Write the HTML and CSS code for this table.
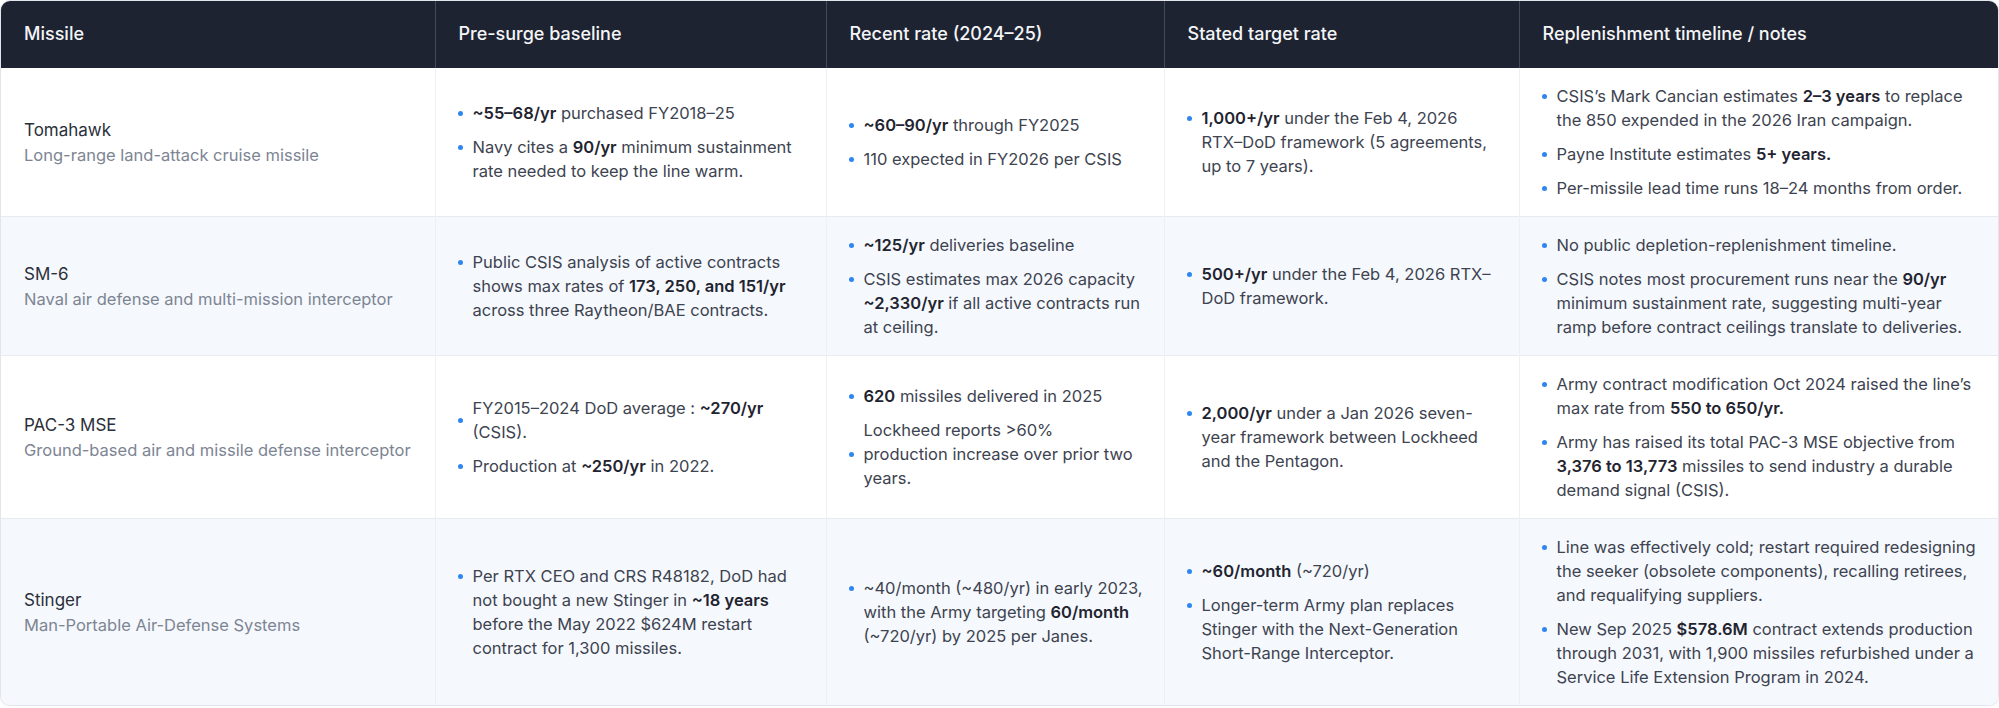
FILE: index.html
```html
<!DOCTYPE html>
<html lang="en">
<head>
<meta charset="utf-8">
<title>Missile production rates</title>
<link rel="stylesheet" href="styles.css">
</head>
<body>
<div class="table-wrap">
  <table class="rates">
    <colgroup>
      <col class="col-missile">
      <col class="col-pre">
      <col class="col-recent">
      <col class="col-target">
      <col class="col-notes">
    </colgroup>
    <thead>
      <tr>
        <th>Missile</th>
        <th>Pre-surge baseline</th>
        <th>Recent rate (2024–25)</th>
        <th>Stated target rate</th>
        <th>Replenishment timeline / notes</th>
      </tr>
    </thead>
    <tbody>
      <tr>
        <td class="name-cell"><div class="name">Tomahawk</div><div class="desc">Long-range land-attack cruise missile</div></td>
        <td><ul class="pts">
          <li><b>~55–68/yr</b> purchased FY2018–25</li>
          <li>Navy cites a <b>90/yr</b> minimum sustainment rate needed to keep the line warm.</li>
        </ul></td>
        <td><ul class="pts">
          <li><b>~60–90/yr</b> through FY2025</li>
          <li>110 expected in FY2026 per CSIS</li>
        </ul></td>
        <td><ul class="pts">
          <li><b>1,000+/yr</b> under the Feb 4, 2026 RTX–DoD framework (5 agreements, up to 7 years).</li>
        </ul></td>
        <td><ul class="pts">
          <li>CSIS’s Mark Cancian estimates <b>2–3 years</b> to replace the 850 expended in the 2026 Iran campaign.</li>
          <li>Payne Institute estimates <b>5+ years.</b></li>
          <li>Per-missile lead time runs 18–24 months from order.</li>
        </ul></td>
      </tr>
      <tr class="alt">
        <td class="name-cell"><div class="name">SM-6</div><div class="desc">Naval air defense and multi-mission interceptor</div></td>
        <td><ul class="pts">
          <li>Public CSIS analysis of active contracts shows max rates of <b>173, 250, and 151/yr</b> across three Raytheon/BAE contracts.</li>
        </ul></td>
        <td><ul class="pts">
          <li><b>~125/yr</b> deliveries baseline</li>
          <li>CSIS estimates max 2026 capacity <b>~2,330/yr</b> if all active contracts run at ceiling.</li>
        </ul></td>
        <td><ul class="pts">
          <li><b>500+/yr</b> under the Feb 4, 2026 RTX–DoD framework.</li>
        </ul></td>
        <td><ul class="pts">
          <li>No public depletion-replenishment timeline.</li>
          <li>CSIS notes most procurement runs near the <b>90/yr</b> minimum sustainment rate, suggesting multi-year ramp before contract ceilings translate to deliveries.</li>
        </ul></td>
      </tr>
      <tr>
        <td class="name-cell"><div class="name">PAC-3 MSE</div><div class="desc">Ground-based air and missile defense interceptor</div></td>
        <td><ul class="pts">
          <li class="mid"><span class="txt">FY2015–2024 DoD average : <b>~270/yr</b> (CSIS).</span></li>
          <li>Production at <b>~250/yr</b> in 2022.</li>
        </ul></td>
        <td><ul class="pts">
          <li><b>620</b> missiles delivered in 2025</li>
          <li class="mid"><span class="txt">Lockheed reports &gt;60%<br>production increase over prior two years.</span></li>
        </ul></td>
        <td><ul class="pts">
          <li><b>2,000/yr</b> under a Jan 2026 seven-year framework between Lockheed and the Pentagon.</li>
        </ul></td>
        <td><ul class="pts">
          <li>Army contract modification Oct 2024 raised the line’s max rate from <b>550 to 650/yr.</b></li>
          <li>Army has raised its total PAC-3 MSE objective from <b>3,376 to 13,773</b> missiles to send industry a durable demand signal (CSIS).</li>
        </ul></td>
      </tr>
      <tr class="alt">
        <td class="name-cell"><div class="name">Stinger</div><div class="desc">Man-Portable Air-Defense Systems</div></td>
        <td><ul class="pts">
          <li>Per RTX CEO and CRS R48182, DoD had not bought a new Stinger in <b>~18 years</b> before the May 2022 $624M restart contract for 1,300 missiles.</li>
        </ul></td>
        <td><ul class="pts">
          <li>~40/month (~480/yr) in early 2023, with the Army targeting <b>60/month</b> (~720/yr) by 2025 per Janes.</li>
        </ul></td>
        <td><ul class="pts">
          <li><b>~60/month</b> (~720/yr)</li>
          <li>Longer-term Army plan replaces Stinger with the Next-Generation Short-Range Interceptor.</li>
        </ul></td>
        <td><ul class="pts">
          <li>Line was effectively cold; restart required redesigning the seeker (obsolete components), recalling retirees, and requalifying suppliers.</li>
          <li>New Sep 2025 <b>$578.6M</b> contract extends production through 2031, with 1,900 missiles refurbished under a Service Life Extension Program in 2024.</li>
        </ul></td>
      </tr>
    </tbody>
  </table>
</div>
</body>
</html>
```

FILE: styles.css
```css
* { box-sizing: border-box; }

html, body {
  margin: 0;
  padding: 0;
  background: #ffffff;
}

body {
  font-family: Inter, "Noto Sans", "Liberation Sans", sans-serif;
  color: #3d4350;
  -webkit-font-smoothing: antialiased;
}

.table-wrap {
  width: 1999px;
  border: 1px solid #e2e6ec;
  border-radius: 10px;
  overflow: hidden;
  box-shadow: 0 1px 2px rgba(20, 30, 50, 0.06);
}

.rates {
  width: 100%;
  table-layout: fixed;
  border-collapse: collapse;
}

.col-missile { width: 434px; }
.col-pre { width: 391px; }
.col-recent { width: 338px; }
.col-target { width: 355px; }
.col-notes { width: 479px; }

.rates th {
  background: #1e2332;
  color: #f4f5f7;
  font-size: 18px;
  font-weight: 500;
  line-height: 24px;
  text-align: left;
  padding: 21px 19px 22px 23px;
  border-left: 1px solid #434a59;
}

.rates th:first-child,
.rates td:first-child {
  border-left: none;
}

.rates td {
  padding: 16px 19px 16px 23px;
  vertical-align: middle;
  font-size: 16.5px;
  line-height: 24px;
  border-left: 1px solid #edf0f4;
  border-top: 1px solid #e7ebf0;
}

.rates thead + tbody tr:first-child td {
  border-top: none;
}

.rates tr.alt td {
  background: #f5f8fc;
}

.name {
  color: #2a2f3a;
  font-size: 17px;
  line-height: 25px;
}

.desc {
  color: #7d8593;
  font-size: 16.5px;
  line-height: 24px;
}

.pts {
  list-style: none;
  margin: 0;
  padding: 0;
}

.pts li {
  position: relative;
  padding-left: 14px;
}

.pts li + li {
  margin-top: 10px;
}

.pts li::before {
  content: "";
  position: absolute;
  left: -1px;
  top: 10px;
  width: 5px;
  height: 5px;
  border-radius: 50%;
  background: #2f86f0;
}

.pts li.mid {
  display: flex;
  align-items: center;
}

.pts li.mid::before {
  top: 50%;
  margin-top: -2.5px;
}

.pts b {
  font-weight: 600;
  color: #1f2430;
}
```
